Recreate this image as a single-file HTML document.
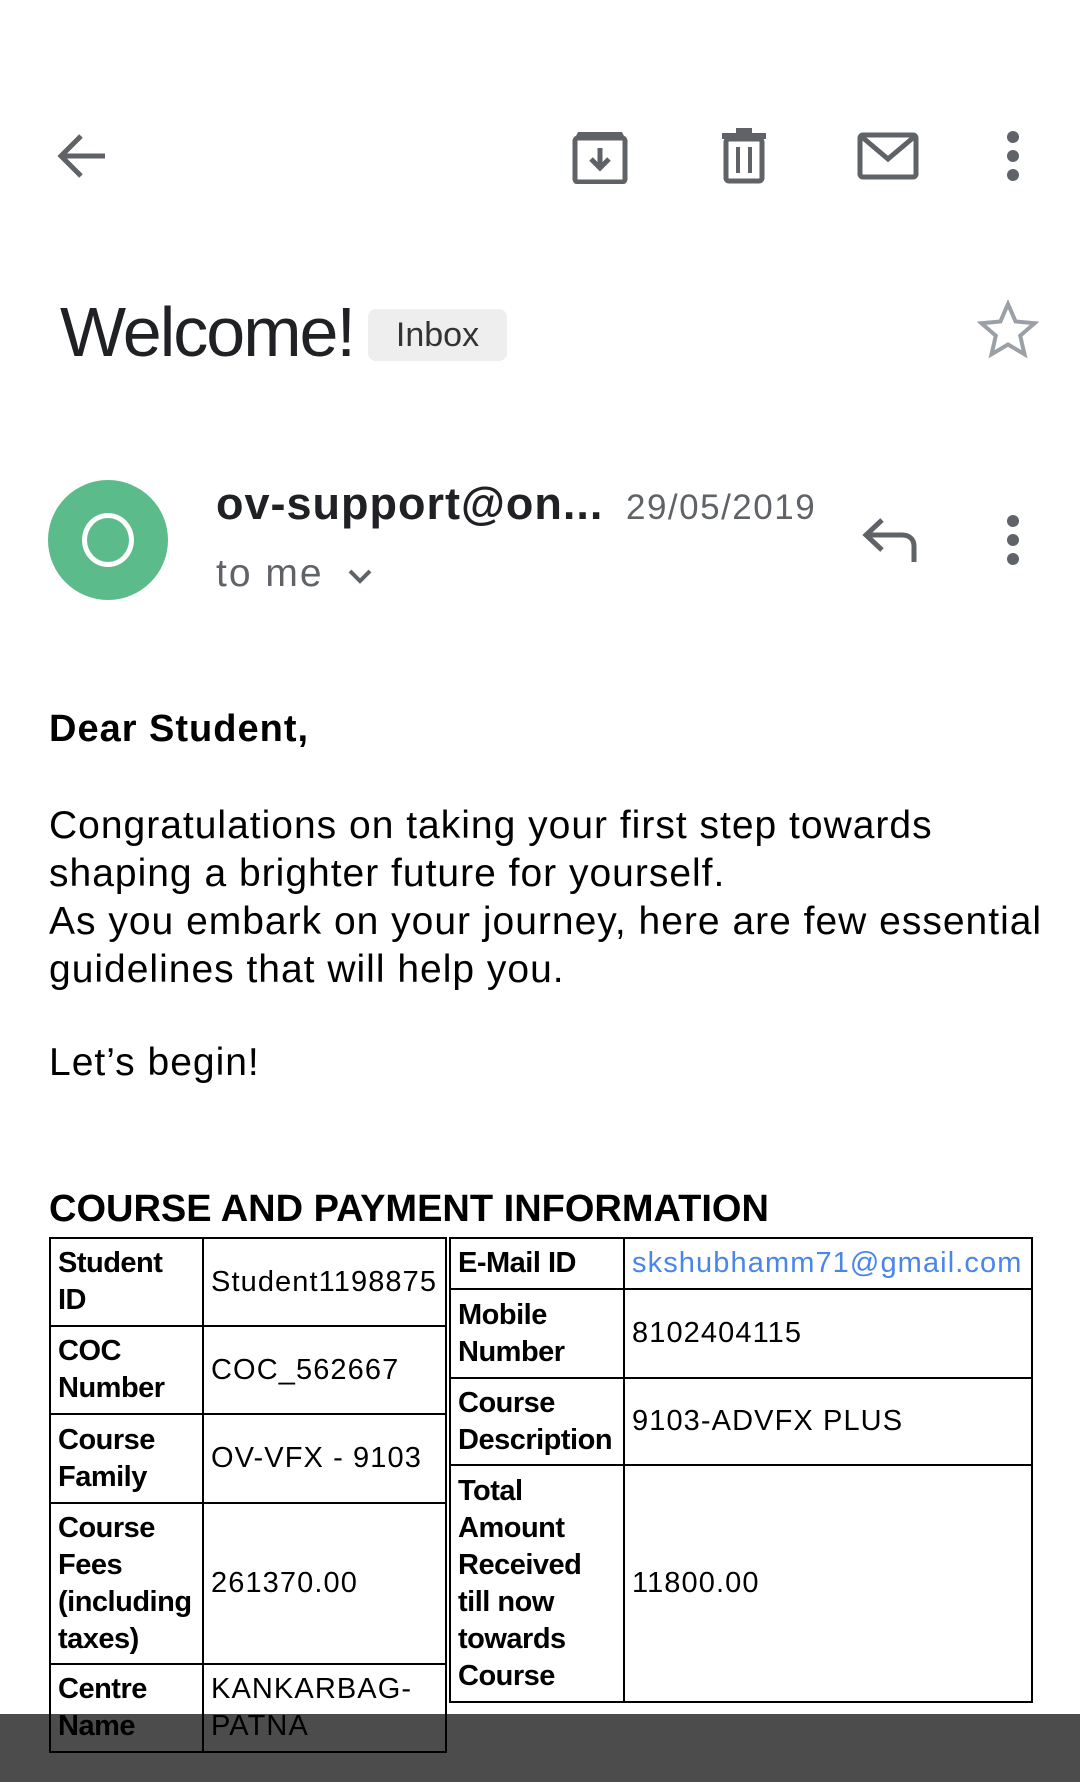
<!DOCTYPE html>
<html><head><meta charset="utf-8"><style>
*{margin:0;padding:0;box-sizing:border-box}
body{width:1080px;height:1782px;background:#fff;position:relative;overflow:hidden;font-family:"Liberation Sans",sans-serif;color:#202124}
.a{position:absolute;white-space:nowrap}
table{position:absolute;border-collapse:collapse;font-size:29px;line-height:37px;letter-spacing:-0.5px}
td{border:2px solid #000;padding:0 7px;vertical-align:middle;color:#000;letter-spacing:1.1px}
td.l{font-weight:bold;letter-spacing:-0.5px}
.body{font-size:39px;letter-spacing:1px;color:#000}
</style></head><body>
<svg class="a" style="left:55px;top:130px" width="54" height="52" viewBox="0 0 54 52"><path d="M50 26H8M26 6L6 26l20 20" fill="none" stroke="#5f6368" stroke-width="5"/></svg>
<svg class="a" style="left:572px;top:128px" width="56" height="56" viewBox="0 0 56 56"><rect x="3" y="10" width="50" height="44" rx="3" fill="none" stroke="#5f6368" stroke-width="5"/><path d="M6 4h44l3 6H3z" fill="#5f6368"/><path d="M28 20v20M19 31l9 9 9-9" fill="none" stroke="#5f6368" stroke-width="5"/></svg>
<svg class="a" style="left:720px;top:128px" width="48" height="56" viewBox="0 0 48 56"><path d="M2 8h44M16 3h16" stroke="#5f6368" stroke-width="6"/><rect x="6" y="11" width="36" height="42" rx="3" fill="none" stroke="#5f6368" stroke-width="5"/><path d="M18 19v26M30 19v26" stroke="#5f6368" stroke-width="4"/></svg>
<svg class="a" style="left:857px;top:132px" width="62" height="48" viewBox="0 0 62 48"><rect x="3" y="3" width="56" height="42" rx="3" fill="none" stroke="#5f6368" stroke-width="5"/><path d="M5 5l26 22L57 5" fill="none" stroke="#5f6368" stroke-width="5"/></svg>
<svg class="a" style="left:1005px;top:130px" width="16" height="52" viewBox="0 0 16 52"><circle cx="8" cy="7" r="6" fill="#5f6368"/><circle cx="8" cy="26" r="6" fill="#5f6368"/><circle cx="8" cy="45" r="6" fill="#5f6368"/></svg>
<div class="a" style="left:60px;top:292px;font-size:70px;letter-spacing:-2px;color:#202124">Welcome!</div>
<div class="a" style="left:368px;top:309px;width:139px;height:52px;background:#eeeeee;border-radius:8px;font-size:34px;line-height:52px;text-align:center;color:#333">Inbox</div>
<svg class="a" style="left:977px;top:300px" width="62" height="60" viewBox="0 0 62 60"><path d="M31 4l7.6 17.5 19 1.7-14.4 12.5 4.3 18.6L31 44.5 14.5 54.3l4.3-18.6L4.4 23.2l19-1.7z" fill="none" stroke="#9aa0a6" stroke-width="4"/></svg>
<div class="a" style="left:48px;top:480px;width:120px;height:120px;border-radius:50%;background:#5bbb8a"></div>
<div class="a" style="left:82px;top:513px;width:52px;height:54px;border-radius:50%;border:5px solid #fff"></div>
<div class="a" style="left:216px;top:478px;font-size:45px;font-weight:bold;color:#202124;letter-spacing:1px">ov-support@on...</div>
<div class="a" style="left:626px;top:488px;font-size:35px;color:#5f6368;letter-spacing:1.5px">29/05/2019</div>
<div class="a" style="left:216px;top:552px;font-size:39px;color:#5f6368;letter-spacing:2px">to me</div>
<svg class="a" style="left:347px;top:568px" width="26" height="18" viewBox="0 0 26 18"><path d="M3 3l10 10L23 3" fill="none" stroke="#5f6368" stroke-width="4"/></svg>
<svg class="a" style="left:860px;top:516px" width="58" height="48" viewBox="0 0 58 48"><path d="M54 46V30c0-7-5-11-12-11H8M22 4L6 19l16 15" fill="none" stroke="#5f6368" stroke-width="5"/></svg>
<svg class="a" style="left:1005px;top:514px" width="16" height="52" viewBox="0 0 16 52"><circle cx="8" cy="7" r="6" fill="#5f6368"/><circle cx="8" cy="26" r="6" fill="#5f6368"/><circle cx="8" cy="45" r="6" fill="#5f6368"/></svg>
<div class="a body" style="left:49px;top:708px;font-weight:bold;font-size:38px">Dear Student,</div>
<div class="a body" style="left:49px;top:802px;line-height:48px">Congratulations on taking your first step towards<br>shaping a brighter future for yourself.<br>As you embark on your journey, here are few essential<br>guidelines that will help you.</div>
<div class="a body" style="left:49px;top:1041px">Let’s begin!</div>
<div class="a" style="left:49px;top:1188px;font-size:38px;font-weight:bold;color:#000;letter-spacing:0">COURSE AND PAYMENT INFORMATION</div>
<table style="left:49px;top:1237px;width:398px">
<tr style="height:88px"><td class="l" style="width:153px">Student<br>ID</td><td>Student1198875</td></tr>
<tr style="height:88px"><td class="l">COC<br>Number</td><td>COC_562667</td></tr>
<tr style="height:89px"><td class="l">Course<br>Family</td><td>OV-VFX - 9103</td></tr>
<tr style="height:161px"><td class="l">Course<br>Fees<br>(including<br>taxes)</td><td>261370.00</td></tr>
<tr style="height:88px"><td class="l">Centre<br>Name</td><td>KANKARBAG-<br>PATNA</td></tr>
</table>
<table style="left:449px;top:1237px;width:584px">
<tr style="height:51px"><td class="l" style="width:174px">E-Mail ID</td><td style="color:#4a86e8">skshubhamm71@gmail.com</td></tr>
<tr style="height:89px"><td class="l">Mobile<br>Number</td><td>8102404115</td></tr>
<tr style="height:87px"><td class="l">Course<br>Description</td><td>9103-ADVFX PLUS</td></tr>
<tr style="height:237px"><td class="l">Total<br>Amount<br>Received<br>till now<br>towards<br>Course</td><td>11800.00</td></tr>
</table>
<div class="a" style="left:0;top:1714px;width:1080px;height:68px;background:rgba(0,0,0,0.7)"></div>
</body></html>
